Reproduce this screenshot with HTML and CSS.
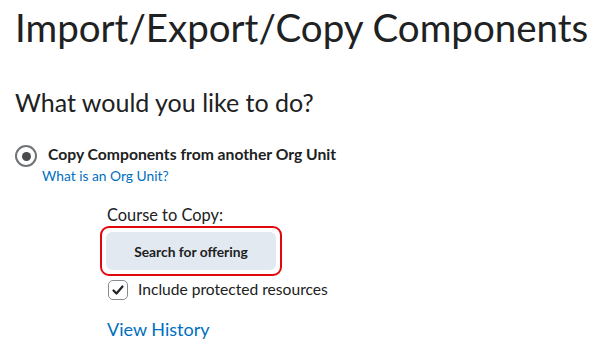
FILE: index.html
```html
<!DOCTYPE html>
<html lang="en">
<head>
    <meta charset="UTF-8">
    <title>Import/Export/Copy Components</title>
    <link rel="stylesheet" href="styles.css">
</head>
<body>
    <div class="page">
        <h1>Import/Export/Copy Components</h1>
        <h2>What would you like to do?</h2>
        <div class="option">
            <span class="radio"><span class="dot"></span></span>
            <div class="option-text">
                <span class="option-label">Copy Components from another Org Unit</span>
                <a class="help-link">What is an Org Unit?</a>
            </div>
        </div>
        <div class="copy-box">
            <div class="field-label">Course to Copy:</div>
            <div class="highlight">
                <button class="search-btn">Search for offering</button>
            </div>
            <label class="check-row">
                <span class="checkbox">
                    <svg width="14" height="14" viewBox="0 0 14 14"><path d="M2.5 7.5 L5.5 10.5 L11.5 3.5" fill="none" stroke="#202122" stroke-width="2.2" stroke-linecap="round" stroke-linejoin="round"/></svg>
                </span>
                Include protected resources
            </label>
            <a class="history-link">View History</a>
        </div>
    </div>
</body>
</html>
```

FILE: styles.css
```css
body { margin: 0; font-family: Lato, "Open Sans", sans-serif; color: #202122; background: #fff; }
.page { padding: 4px 0 0 15px; }
h1 { font-size: 38.5px; font-weight: 400; line-height: 46px; margin: 0; white-space: nowrap; }
h2 { font-size: 25px; font-weight: 400; line-height: 30px; margin: 37px 0 0 0; }
.option { display: flex; align-items: flex-start; gap: 11px; margin-top: 26px; }
.radio { width: 18px; height: 18px; margin-top: 2px; border: 2px solid #6e7477; border-radius: 50%; display: flex; align-items: center; justify-content: center; flex-shrink: 0; }
.dot { width: 9px; height: 9px; border-radius: 50%; background: #494c4e; }
.option-text { display: flex; flex-direction: column; }
.option-label { font-size: 15.7px; font-weight: 700; line-height: 22px; }
.help-link { color: #006fbf; font-size: 13.8px; line-height: 22px; margin-left: -6px; cursor: pointer; }
.copy-box { margin-left: 92px; margin-top: 17px; }
.field-label { font-size: 16.4px; line-height: 22px; }
.highlight { display: inline-block; border: 2px solid #e2070d; border-radius: 9px; padding: 4px; margin-left: -7px; }
.search-btn { width: 170px; height: 38px; background: #e3e9f1; border: none; border-radius: 6px; font-family: inherit; font-weight: 700; font-size: 13.8px; color: #202122; cursor: pointer; display: block; }
.check-row { display: flex; align-items: center; gap: 10px; font-size: 15.6px; line-height: 21px; margin: 3px 0 0 1px; }
.checkbox { width: 18px; height: 18px; border: 1.5px solid #868c8f; border-radius: 5px; display: flex; align-items: center; justify-content: center; }
.history-link { display: block; color: #006fbf; font-size: 18px; line-height: 22px; margin-top: 18px; cursor: pointer; }
```
